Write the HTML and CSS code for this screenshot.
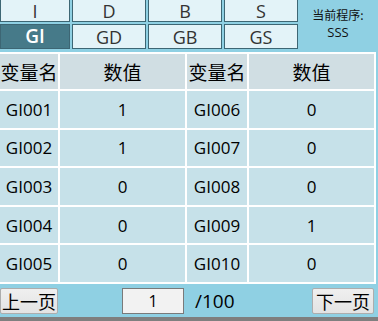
FILE: index.html
```html
<!DOCTYPE html>
<html lang="zh">
<head>
<meta charset="utf-8">
<link rel="stylesheet" href="styles.css">
</head>
<body>
<div class="app">
  <div class="top">
    <div class="tabs">
      <div class="tab r1">I</div>
      <div class="tab r1">D</div>
      <div class="tab r1">B</div>
      <div class="tab r1">S</div>
      <div class="tab active">GI</div>
      <div class="tab">GD</div>
      <div class="tab">GB</div>
      <div class="tab">GS</div>
    </div>
    <div class="prog">
      <div class="prog-label">当前程序:</div>
      <div class="prog-name">SSS</div>
    </div>
  </div>
  <div class="grid">
    <div class="cell head">变量名</div>
    <div class="cell head">数值</div>
    <div class="cell head">变量名</div>
    <div class="cell head">数值</div>

    <div class="cell">GI001</div><div class="cell">1</div><div class="cell">GI006</div><div class="cell">0</div>
    <div class="cell">GI002</div><div class="cell">1</div><div class="cell">GI007</div><div class="cell">0</div>
    <div class="cell">GI003</div><div class="cell">0</div><div class="cell">GI008</div><div class="cell">0</div>
    <div class="cell">GI004</div><div class="cell">0</div><div class="cell">GI009</div><div class="cell">1</div>
    <div class="cell">GI005</div><div class="cell">0</div><div class="cell">GI010</div><div class="cell">0</div>
  </div>
  <div class="pager">
    <button class="btn prev">上一页</button>
    <div class="page-input">1</div>
    <div class="total">/100</div>
    <button class="btn next">下一页</button>
  </div>
</div>
</body>
</html>
```
FILE: styles.css
```css
html, body {
  margin: 0;
  padding: 0;
}
body {
  width: 378px;
  height: 321px;
  overflow: hidden;
  background: #8fd0e3;
  font-family: "Open Sans", "Noto Sans CJK SC", sans-serif;
}
.app {
  width: 378px;
  height: 321px;
  display: flex;
  flex-direction: column;
  background: #8fd0e3;
}
.top {
  display: flex;
  height: 49px;
}
.tabs {
  display: grid;
  grid-template-columns: 70px 74px 74px 74px;
  grid-template-rows: 22px 25px;
  column-gap: 2px;
  row-gap: 2px;
  width: 298px;
}
.tab {
  box-sizing: border-box;
  border: 1px solid #3d6674;
  background: #e3f3f8;
  color: #333333;
  font-size: 18px;
  line-height: 1;
  display: flex;
  align-items: center;
  justify-content: center;
}
.tab.r1 {
  border-top-width: 0;
}
.tab.active {
  background: #467a89;
  color: #ffffff;
  font-weight: 600;
  font-size: 19px;
}
.prog {
  flex: 1;
  display: flex;
  flex-direction: column;
  align-items: center;
  padding-top: 7px;
  color: #111111;
}
.prog-label {
  font-family: "Noto Sans CJK SC", sans-serif;
  font-size: 12px;
  line-height: 16px;
}
.prog-name {
  font-size: 13px;
  line-height: 18px;
}
.grid {
  margin-top: 3px;
  width: 376px;
  height: 232px;
  box-sizing: border-box;
  background: #ffffff;
  padding: 2px 2px 2px 0;
  display: grid;
  grid-template-columns: 58px 125px 60px 125px;
  grid-template-rows: 35px repeat(5, 1fr);
  gap: 2px;
}
.cell {
  background: #c6e1e9;
  color: #000000;
  font-size: 17px;
  display: flex;
  align-items: center;
  justify-content: center;
  white-space: nowrap;
  overflow: visible;
}
.cell.head {
  background: #d0dee3;
  font-family: "Noto Sans CJK SC", sans-serif;
  font-size: 19px;
}
.pager {
  height: 33px;
  display: flex;
  align-items: center;
  border-bottom: 4px solid #7f7f7f;
}
.btn {
  height: 26px;
  box-sizing: border-box;
  border: 1px solid #adadad;
  border-radius: 2px;
  background: linear-gradient(#efefef, #e3e3e3);
  font-family: "Noto Sans CJK SC", sans-serif;
  font-size: 18px;
  color: #000000;
  padding: 0;
  line-height: 1;
  white-space: nowrap;
  display: flex;
  align-items: center;
  justify-content: center;
}
.prev {
  width: 58px;
}
.next {
  width: 62px;
  margin-left: auto;
  margin-right: 4px;
}
.page-input {
  margin-left: 64px;
  width: 62px;
  height: 26px;
  box-sizing: border-box;
  border: 1px solid #7a7a7a;
  background: #f2f2f2;
  font-size: 16px;
  display: flex;
  align-items: center;
  justify-content: center;
  color: #000000;
}
.total {
  margin-left: 11px;
  font-size: 19px;
  color: #000000;
}
```
